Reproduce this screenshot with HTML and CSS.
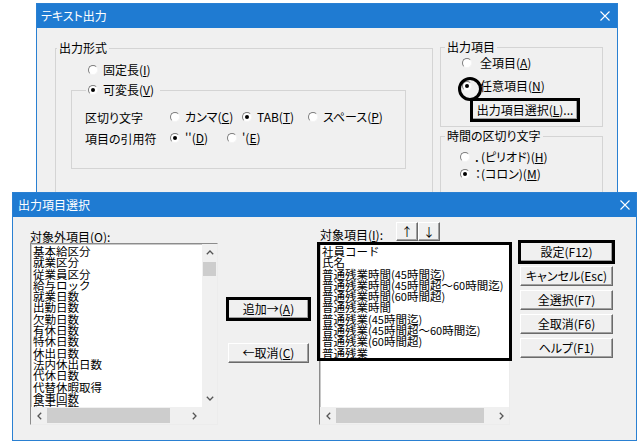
FILE: index.html
```html
<!DOCTYPE html>
<html lang="ja">
<head>
<meta charset="utf-8">
<title>テキスト出力</title>
<link rel="stylesheet" href="styles.css">
</head>
<body>
<section class="win win-text">
  <header class="titlebar">
    <span class="title">テキスト出力</span>
    <svg class="close" width="10" height="10" viewBox="0 0 10 10"><path d="M0.5 0.5L9.5 9.5M9.5 0.5L0.5 9.5" stroke="#fff" stroke-width="1.1"/></svg>
  </header>
  <div class="text-body">
    <fieldset class="grp grp-format">
      <legend>出力形式</legend>
      <div class="radio row-fixed"><span class="rb"></span>固定長(<u>I</u>)</div>
      <fieldset class="grp grp-var">
        <legend><span class="radio"><span class="rb on"></span>可変長(<u>V</u>)</span></legend>
        <div class="opt-row">
          <span class="opt-label">区切り文字</span>
          <span class="radio opt-comma"><span class="rb"></span>カンマ(<u>C</u>)</span>
          <span class="radio opt-tab"><span class="rb on"></span>TAB(<u>T</u>)</span>
          <span class="radio"><span class="rb"></span>スペース(<u>P</u>)</span>
        </div>
        <div class="opt-row">
          <span class="opt-label">項目の引用符</span>
          <span class="radio opt-dq"><span class="rb on"></span>''(<u>D</u>)</span>
          <span class="radio"><span class="rb"></span>'(<u>E</u>)</span>
        </div>
      </fieldset>
    </fieldset>
    <div class="side">
      <fieldset class="grp grp-items">
        <legend>出力項目</legend>
        <div class="radio wide"><span class="rb"></span>全項目(<u>A</u>)</div>
        <div class="radio wide row-any"><span class="rb on ring"></span>任意項目(<u>N</u>)</div>
        <div class="btn mark btn-pick">出力項目選択(<u>L</u>)...</div>
      </fieldset>
      <fieldset class="grp grp-time">
        <legend>時間の区切り文字</legend>
        <div class="radio"><span class="rb"></span>．(ピリオド)(<u>H</u>)</div>
        <div class="radio row-colon"><span class="rb on"></span>：(コロン)(<u>M</u>)</div>
      </fieldset>
    </div>
  </div>
</section>

<section class="win win-select">
  <header class="titlebar">
    <span class="title">出力項目選択</span>
    <svg class="close" width="10" height="10" viewBox="0 0 10 10"><path d="M0.5 0.5L9.5 9.5M9.5 0.5L0.5 9.5" stroke="#fff" stroke-width="1.1"/></svg>
  </header>
  <div class="sel-body">
    <div class="col col-out">
      <div class="col-head"><span class="lbl">対象外項目(<u>O</u>):</span></div>
      <div class="listbox with-v">
        <div class="items">
          <div>基本給区分</div>
          <div>就業区分</div>
          <div>従業員区分</div>
          <div>給与ロック</div>
          <div>就業日数</div>
          <div>出勤日数</div>
          <div>欠勤日数</div>
          <div>有休日数</div>
          <div>特休日数</div>
          <div>休出日数</div>
          <div>法内休出日数</div>
          <div>代休日数</div>
          <div>代替休暇取得</div>
          <div>食事回数</div>
          <div>宿直回数</div>
        </div>
        <div class="vscroll">
          <div class="sb-btn"><svg width="8" height="5" viewBox="0 0 8 5"><path d="M0.8 4.2L4 1L7.2 4.2" fill="none" stroke="#555" stroke-width="1.3"/></svg></div>
          <div class="vtrack"><div class="vthumb"></div></div>
          <div class="sb-btn"><svg width="8" height="5" viewBox="0 0 8 5"><path d="M0.8 0.8L4 4L7.2 0.8" fill="none" stroke="#555" stroke-width="1.3"/></svg></div>
        </div>
        <div class="hscroll">
          <div class="sb-btn"><svg width="5" height="8" viewBox="0 0 5 8"><path d="M4.2 0.8L1 4L4.2 7.2" fill="none" stroke="#555" stroke-width="1.3"/></svg></div>
          <div class="htrack"><div class="hthumb thumb-out"></div></div>
          <div class="sb-btn"><svg width="5" height="8" viewBox="0 0 5 8"><path d="M0.8 0.8L4 4L0.8 7.2" fill="none" stroke="#555" stroke-width="1.3"/></svg></div>
        </div>
        <div class="corner"></div>
      </div>
    </div>

    <div class="col col-mid">
      <div class="btn mark">追加→(<u>A</u>)</div>
      <div class="btn btn-cancel-item">←取消(<u>C</u>)</div>
    </div>

    <div class="col col-in">
      <div class="col-head head-in">
        <span class="lbl lbl-in">対象項目(<u>I</u>):</span>
        <div class="btn arrow">↑</div>
        <div class="btn arrow">↓</div>
      </div>
      <div class="listbox no-v">
        <div class="items">
          <div>社員コード</div>
          <div>氏名</div>
          <div>普通残業時間<span class="n">(45</span>時間迄<span class="n">)</span></div>
          <div>普通残業時間<span class="n">(45</span>時間超～<span class="n">60</span>時間迄<span class="n">)</span></div>
          <div>普通残業時間<span class="n">(60</span>時間超<span class="n">)</span></div>
          <div>普通残業時間</div>
          <div>普通残業<span class="n">(45</span>時間迄<span class="n">)</span></div>
          <div>普通残業<span class="n">(45</span>時間超～<span class="n">60</span>時間迄<span class="n">)</span></div>
          <div>普通残業<span class="n">(60</span>時間超<span class="n">)</span></div>
          <div>普通残業</div>
        </div>
        <div class="hscroll">
          <div class="sb-btn"><svg width="5" height="8" viewBox="0 0 5 8"><path d="M4.2 0.8L1 4L4.2 7.2" fill="none" stroke="#555" stroke-width="1.3"/></svg></div>
          <div class="htrack"><div class="hthumb thumb-in"></div></div>
          <div class="sb-btn"><svg width="5" height="8" viewBox="0 0 5 8"><path d="M0.8 0.8L4 4L0.8 7.2" fill="none" stroke="#555" stroke-width="1.3"/></svg></div>
        </div>
        <div class="mark-box"></div>
      </div>
    </div>

    <div class="col col-btns">
      <div class="btn mark">設定(F12)</div>
      <div class="btn">キャンセル(Esc)</div>
      <div class="btn">全選択(F7)</div>
      <div class="btn">全取消(F6)</div>
      <div class="btn">ヘルプ(F1)</div>
    </div>
  </div>
</section>
</body>
</html>
```

FILE: styles.css
```css
* { box-sizing: border-box; }
html, body { margin: 0; padding: 0; }
body {
  width: 643px;
  height: 444px;
  overflow: hidden;
  position: relative;
  background: #fff;
  color: #000;
  font-family: "Noto Sans CJK JP", "Noto Sans", sans-serif;
  font-size: 12px;
  font-feature-settings: "palt";
}
u { text-decoration: underline; text-underline-offset: 1px; }

/* windows on the desktop */
.win {
  position: absolute;
  display: flex;
  flex-direction: column;
  background: #f0f0f0;
  border: 1px solid #2a80d2;
}
.win-text { left: 36px; top: 3px; width: 582px; height: 205px; }
.win-select { left: 12px; top: 192px; width: 625px; height: 249px; z-index: 2; }

.titlebar {
  flex: none;
  height: 24px;
  background: #1f7bd2;
  color: #fff;
  display: flex;
  align-items: center;
  justify-content: space-between;
  padding: 0 7px 0 4px;
  line-height: 14px;
}
.win-select .titlebar { padding-left: 5px; padding-right: 6px; }

/* group boxes */
.grp {
  margin: 0;
  padding: 0;
  min-width: 0;
  border: 1px solid #d4d4d4;
}
.grp > legend {
  padding: 0 2px;
  margin-left: 1px;
  height: 14px;
  line-height: 14px;
}

.text-body {
  display: flex;
  gap: 7px;
  padding: 13px 0 0 18px;
}

.radio {
  display: flex;
  align-items: center;
  height: 16px;
  line-height: 16px;
  white-space: nowrap;
}
.rb {
  flex: none;
  position: relative;
  width: 10px;
  height: 10px;
  margin-right: 5px;
  border-radius: 50%;
  background: #fff;
  border: 1px solid;
  border-color: #7c7c7c #f4f4f4 #f4f4f4 #7c7c7c;
}
.rb.on::before {
  content: "";
  position: absolute;
  left: 2px;
  top: 2px;
  width: 4px;
  height: 4px;
  border-radius: 50%;
  background: #000;
}
.rb.ring::after {
  content: "";
  position: absolute;
  left: -5px;
  top: -5px;
  width: 18px;
  height: 18px;
  border: 3px solid #000;
  border-radius: 50%;
}

.grp-format { width: 378px; height: 180px; padding-top: 7px; }
.row-fixed { margin-left: 32px; }

.grp-var {
  margin: 5px 0 0 15px;
  width: 335px;
  height: 86px;
  padding-top: 12px;
}
.grp-var > legend { margin-left: 14px; padding: 0 6px 0 2px; }
.grp-var > legend .radio { height: 14px; line-height: 14px; }

.opt-row { display: flex; align-items: center; height: 16px; margin-left: 13px; }
.opt-row + .opt-row { margin-top: 5px; }
.opt-label { width: 85px; flex: none; }
.opt-comma { width: 72px; }
.opt-tab { width: 66px; }
.opt-dq { width: 57px; }

.side { width: 163px; display: flex; flex-direction: column; }
.grp-items { margin-top: -1px; height: 87px; padding-top: 1px; }
.grp-items > legend, .grp-time > legend { margin-left: 4px; }
.grp-items .radio { margin-left: 21px; }
.radio.wide .rb { margin-right: 8px; }
.row-any { margin-top: 7px; }
.btn-pick { margin: 6px 0 0 31px; width: 106px; height: 18px; }

.grp-time { margin-top: 2px; height: 90px; padding-top: 6px; }
.grp-time .radio { margin-left: 19px; }
.row-colon { margin-top: 1px; }

/* buttons */
.btn {
  display: flex;
  align-items: center;
  justify-content: center;
  height: 20px;
  background: #f0f0f0;
  border: 1px solid;
  border-color: #ffffff #6a6a6a #6a6a6a #ffffff;
  box-shadow: inset -1px -1px 0 #a0a0a0;
  white-space: nowrap;
  line-height: 14px;
}
.btn.mark { outline: 3px solid #000; outline-offset: -1px; }

/* selection dialog */
.sel-body {
  flex: 1;
  display: flex;
  gap: 10px;
  padding-left: 17px;
}
.col { display: flex; flex-direction: column; flex: none; }
.col-out { width: 188px; }
.col-mid { width: 81px; padding-top: 82px; }
.btn-cancel-item { margin-top: 24px; }
.col-in { width: 191px; }
.col-btns { width: 93px; padding-top: 25px; gap: 4px; }

.col-head { height: 26px; flex: none; }
.lbl { display: block; padding-top: 14px; line-height: 12px; }
.head-in { display: flex; align-items: flex-start; }
.lbl-in { width: 77px; padding: 12px 0 0 1px; }
.btn.arrow { width: 22px; height: 19px; margin-top: 5px; font-size: 12px; }

.listbox {
  position: relative;
  height: 182px;
  background: #fff;
  border: 1px solid;
  border-color: #8c8c8c #ececec #ececec #8c8c8c;
  box-shadow: inset 1px 1px 0 #c8c8c8;
  display: grid;
}
.listbox.with-v { grid-template-columns: 1fr 15px; grid-template-rows: 1fr 17px; }
.listbox.no-v { grid-template-columns: 1fr; grid-template-rows: 1fr 17px; }

.items {
  overflow: hidden;
  padding: 2px 0 0 2px;
  font-size: 11.5px;
  line-height: 11.3px;
  font-feature-settings: normal;
  white-space: nowrap;
}
.items > div { height: 11.3px; }
.items .n { font-size: 11px; }

.vscroll { display: flex; flex-direction: column; background: #f0f0f0; }
.hscroll { display: flex; background: #f0f0f0; }
.sb-btn { flex: none; display: flex; align-items: center; justify-content: center; }
.vscroll .sb-btn { height: 17px; }
.hscroll .sb-btn { width: 16px; }
.vtrack { flex: 1; padding-top: 1px; }
.vthumb { height: 14px; margin: 0 1px; background: #cdcdcd; }
.htrack { flex: 1; display: flex; align-items: center; }
.hthumb { height: 15px; background: #cdcdcd; }
.thumb-out { width: 123px; }
.thumb-in { width: 148px; }
.corner { background: #f0f0f0; }
.with-v .hscroll { grid-column: 1; }

.mark-box {
  position: absolute;
  left: -3px;
  top: -2px;
  width: 195px;
  height: 119px;
  border: 3px solid #000;
  pointer-events: none;
}
```
